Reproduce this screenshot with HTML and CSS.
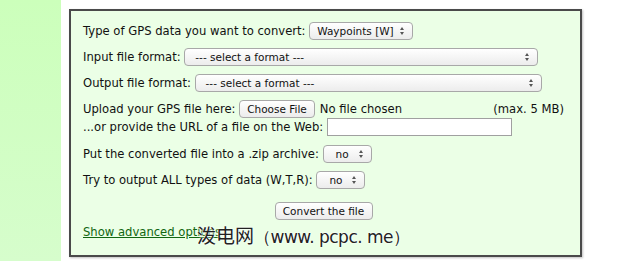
FILE: index.html
```html
<!DOCTYPE html>
<html lang="en">
<head>
    <meta charset="UTF-8">
    <title>GPS Visualizer: Convert GPS files</title>
    <link rel="stylesheet" href="styles.css">
</head>
<body>
    <div class="page">
        <div class="side"></div>
        <div class="main">
            <form class="convert-box">
                <div class="row">
                    <span>Type of GPS data you want to convert:&nbsp;</span>
                    <span class="sel sel-type">Waypoints [W]</span>
                </div>
                <div class="row">
                    <span>Input file format:&nbsp;</span>
                    <span class="sel sel-input">--- select a format ---</span>
                </div>
                <div class="row">
                    <span>Output file format:&nbsp;</span>
                    <span class="sel sel-output">--- select a format ---</span>
                </div>
                <div class="row row-upload">
                    <span>Upload your GPS file here:&nbsp;</span>
                    <span class="btn">Choose File</span>
                    <span class="no-file">No file chosen</span>
                    <span class="max">(max. 5 MB)</span>
                </div>
                <div class="row row-url">
                    <span>...or provide the URL of a file on the Web:&nbsp;</span>
                    <span class="url-input"></span>
                </div>
                <div class="row row-zip">
                    <span>Put the converted file into a .zip archive:&nbsp;</span>
                    <span class="sel sel-small">no</span>
                </div>
                <div class="row">
                    <span>Try to output ALL types of data (W,T,R):&nbsp;</span>
                    <span class="sel sel-small">no</span>
                </div>
                <div class="row row-submit">
                    <span class="btn btn-convert">Convert the file</span>
                </div>
                <div class="row-link">
                    <a href="#" class="adv-link">Show advanced options</a>
                </div>
                <div class="watermark">泼电网<span class="wm-latin">（www. pcpc. me）</span></div>
            </form>
        </div>
    </div>
</body>
</html>
```

FILE: styles.css
```css
body {
    margin: 0;
    background-color: white;
    font-family: "DejaVu Sans", Verdana, sans-serif;
    font-size: 11.6px;
    color: #111;
}

.page {
    display: flex;
    height: 261px;
    overflow: hidden;
}

.side {
    width: 61px;
    flex-shrink: 0;
    background: linear-gradient(#ccffbb, #d6fdcc);
}

.main {
    padding: 9px 0 0 8px;
}

.convert-box {
    position: relative;
    width: 481px;
    height: 233px;
    padding: 11px 16px 0 12px;
    background-color: #ebffe6;
    border: 2px solid #4a4a4a;
    box-shadow: 1px 1px 2px rgba(0, 0, 0, 0.25);
}

.row {
    display: flex;
    align-items: center;
    height: 18px;
    margin-bottom: 8px;
    white-space: nowrap;
}

.row-upload {
    margin-bottom: 0;
}

.row-url {
    margin-bottom: 9px;
}

.row-submit {
    justify-content: center;
    margin-top: 13px;
    margin-bottom: 5px;
}

.sel {
    position: relative;
    box-sizing: border-box;
    height: 18px;
    padding: 0 20px 0 10px;
    font-size: 10.5px;
    line-height: 16px;
    color: #111;
    background: linear-gradient(#ffffff, #ececec);
    border: 1px solid #a8a8a8;
    border-radius: 4px;
}

.sel::after {
    content: "";
    position: absolute;
    right: 8px;
    top: 4px;
    width: 0;
    height: 0;
    border-left: 2.5px solid transparent;
    border-right: 2.5px solid transparent;
    border-bottom: 3px solid #555;
}

.sel::before {
    content: "";
    position: absolute;
    right: 8px;
    bottom: 4px;
    width: 0;
    height: 0;
    border-left: 2.5px solid transparent;
    border-right: 2.5px solid transparent;
    border-top: 3px solid #555;
}

.sel-type {
    width: 104px;
    padding-left: 7px;
}

.sel-input {
    width: 354px;
}

.sel-output {
    width: 347px;
}

.sel-small {
    width: 49px;
    padding-left: 12px;
}

.btn {
    box-sizing: border-box;
    height: 18px;
    padding: 0 7px;
    font-size: 10.5px;
    line-height: 16px;
    background: linear-gradient(#ffffff, #ececec);
    border: 1px solid #a8a8a8;
    border-radius: 4px;
}

.no-file {
    margin-left: 5px;
}

.max {
    margin-left: auto;
}

.url-input {
    box-sizing: border-box;
    width: 185px;
    height: 18px;
    background-color: white;
    border: 1px solid #a0a0a0;
}

.btn-convert {
    width: 98px;
    text-align: center;
    padding: 0;
}

.row-link {
    line-height: 14px;
}

.adv-link {
    color: #116611;
    text-decoration: underline;
}

.watermark {
    position: absolute;
    left: 126px;
    top: 212px;
    font-family: "Noto Sans CJK SC", sans-serif;
    font-size: 19px;
    line-height: 24px;
    color: #222;
    text-shadow: 0 0 2px white, 0 0 2px white;
    white-space: nowrap;
}

.wm-latin {
    font-family: "DejaVu Sans", sans-serif;
    font-size: 17px;
    letter-spacing: -0.5px;
}
```
